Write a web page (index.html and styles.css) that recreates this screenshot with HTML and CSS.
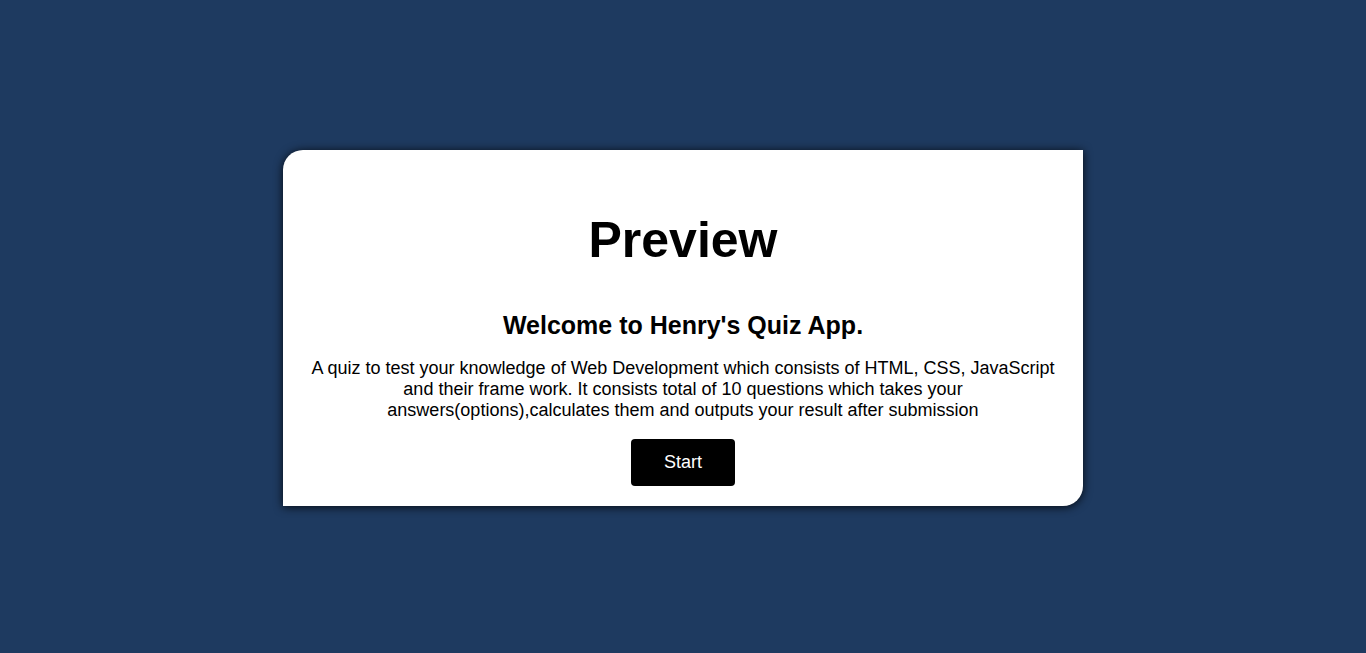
FILE: index.html
```html
<!DOCTYPE html>
<html lang="en">
<head>
<meta charset="utf-8">
<title>Quiz App</title>
<link rel="stylesheet" href="styles.css">
</head>
<body>
  <main class="card">
    <h1 class="title">Preview</h1>
    <h2 class="welcome">Welcome to Henry's Quiz App.</h2>
    <p class="desc">A quiz to test your knowledge of Web Development which consists of HTML, CSS, JavaScript and their frame work. It consists total of 10 questions which takes your answers(options),calculates them and outputs your result after submission</p>
    <button class="start">Start</button>
  </main>
</body>
</html>
```

FILE: styles.css
```css
html, body {
  margin: 0;
  padding: 0;
}
body {
  background: #1e3a60;
  min-height: 100vh;
  box-sizing: border-box;
  display: flex;
  justify-content: center;
  align-items: flex-start;
  padding-top: 150px;
  font-family: "Liberation Sans", Arial, sans-serif;
  color: #000;
}
.card {
  width: 800px;
  box-sizing: border-box;
  background: #fff;
  border-radius: 20px 0 20px 0;
  box-shadow: 0 1px 10px rgba(0, 0, 0, 0.85);
  padding: 61px 20px 20px;
  display: flex;
  flex-direction: column;
  align-items: center;
  text-align: center;
}
.title {
  margin: 0;
  font-size: 50px;
  line-height: 58px;
  font-weight: bold;
}
.welcome {
  margin: 42px 0 0;
  font-size: 25px;
  line-height: 29px;
  font-weight: bold;
}
.desc {
  margin: 18px 0 0;
  font-size: 18px;
  line-height: 21px;
}
.start {
  margin-top: 18px;
  width: 104px;
  height: 47px;
  background: #000;
  color: #fff;
  border: none;
  border-radius: 4px;
  font-family: "Liberation Sans", Arial, sans-serif;
  font-size: 18px;
  cursor: pointer;
}
```
